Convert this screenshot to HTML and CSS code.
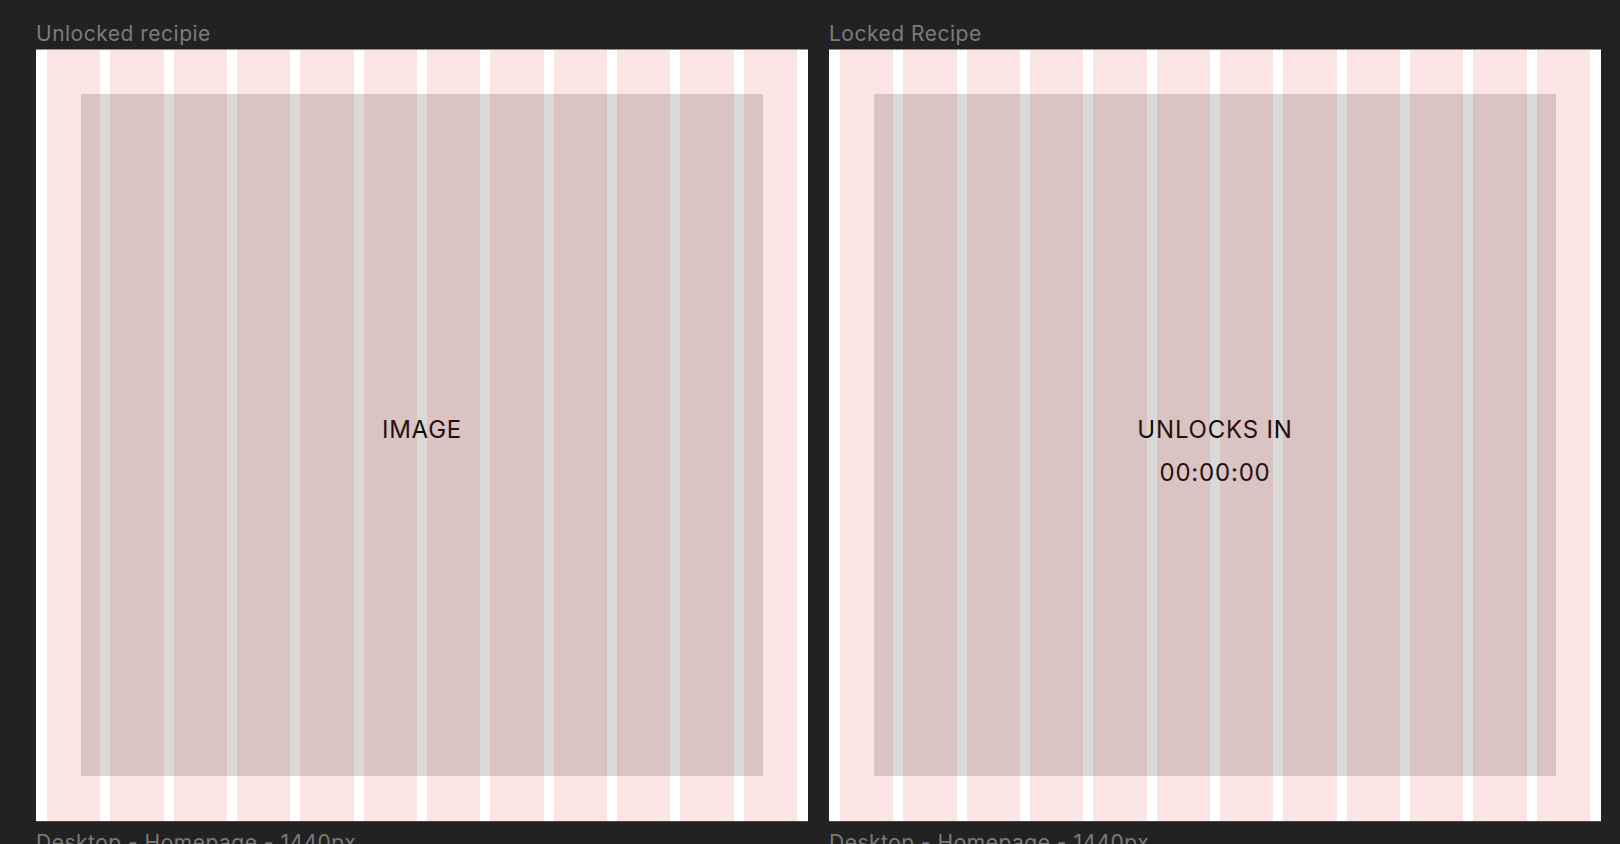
FILE: index.html
```html
<!DOCTYPE html>
<html lang="en">
<head>
    <meta charset="UTF-8">
    <meta name="viewport" content="width=device-width, initial-scale=1.0">
    <title>Recipe frames</title>
    <link rel="stylesheet" href="styles.css">
</head>
<body>

<div class="board">

    <!-- Unlocked state -->
    <section class="frame-col">
        <div class="frame-label">Unlocked recipie</div>
        <div class="frame">
            <div class="placeholder">
                <p class="caption">IMAGE</p>
            </div>
            <div class="grid">
                <span></span><span></span><span></span><span></span>
                <span></span><span></span><span></span><span></span>
                <span></span><span></span><span></span><span></span>
            </div>
        </div>
        <div class="frame-label below">Desktop - Homepage - 1440px</div>
    </section>

    <!-- Locked state -->
    <section class="frame-col">
        <div class="frame-label">Locked Recipe</div>
        <div class="frame">
            <div class="placeholder">
                <p class="caption">UNLOCKS IN</p>
                <p class="caption">00:00:00</p>
            </div>
            <div class="grid">
                <span></span><span></span><span></span><span></span>
                <span></span><span></span><span></span><span></span>
                <span></span><span></span><span></span><span></span>
            </div>
        </div>
        <div class="frame-label below">Desktop - Homepage - 1440px</div>
    </section>

</div>

</body>
</html>
```

FILE: styles.css
```css
html, body {
    margin: 0;
    height: 100%;
    overflow: hidden;
}
body {
    background-color: #222222;
    font-family: Inter, "Noto Sans", sans-serif;
}
.board {
    display: flex;
    gap: 21px;
    padding: 21px 0 0 36px;
}
.frame-col {
    width: 772px;
}
.frame-label {
    color: #7b7b7b;
    font-size: 21px;
    line-height: 25px;
    letter-spacing: 0.5px;
    margin-bottom: 4px;
    white-space: nowrap;
}
.frame-label.below {
    margin-top: 9px;
    margin-bottom: 0;
}
.frame {
    position: relative;
    width: 772px;
    height: 771px;
    box-sizing: border-box;
    padding: 44px 45px 45px;
    background-color: #fff;
    box-shadow: 0 -1px 0 #8c8c8c, 0 1px 0 #474747;
}
.placeholder {
    height: 100%;
    box-sizing: border-box;
    padding-top: 314px;
    background-color: #d9d9d9;
    text-align: center;
}
.caption {
    margin: 0;
    font-size: 24px;
    line-height: 43px;
    letter-spacing: 0.8px;
    color: #0c0c0c;
}
/* layout grid overlay, drawn on top like the design tool does */
.grid {
    position: absolute;
    top: 0;
    left: 0;
    right: 0;
    bottom: 0;
    display: flex;
    gap: 10px;
    padding: 0 11px;
    pointer-events: none;
}
.grid span {
    flex: 1;
    background-color: rgba(220, 50, 45, 0.13);
}
```
